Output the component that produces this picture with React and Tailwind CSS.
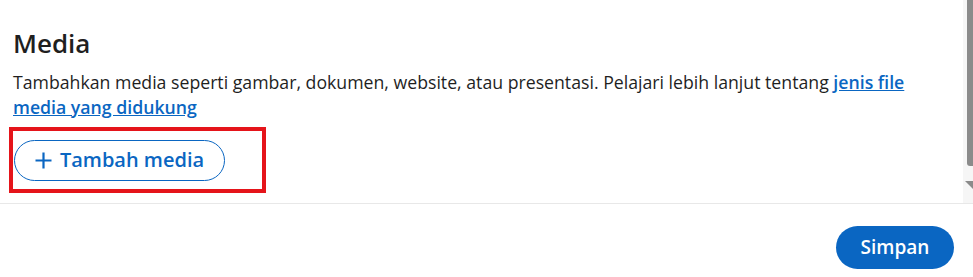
import React from 'react'

export default function App(){
  return (
    <div className="w-[973px] h-[277px] bg-white flex flex-col overflow-hidden" style={{ fontFamily: '"Open Sans", "Noto Sans", sans-serif' }}>
      {/* Scrollable content area */}
      <div className="flex h-[204px] border-b border-[#e8e8e8]">
        <div className="flex-1 pl-[13px] pr-6 pt-[26px]">
          <h2 className="text-[26px] leading-[34px] font-semibold text-[#1f1f1f]">Media</h2>
          <p className="mt-[10px] text-[17.7px] leading-[25px] text-[#1f1f1f]">
            Tambahkan media seperti gambar, dokumen, website, atau presentasi. Pelajari lebih lanjut tentang{' '}
            <a href="#" className="text-[#0a66c2] font-semibold underline">jenis file media yang didukung</a>
          </p>
          <div className="mt-[7px] -ml-[4px] w-[257px] h-[66px] border-[4px] border-[#e5141a] flex items-center pl-[1px]">
            <button className="h-[41px] w-[211px] rounded-full border border-[#0a66c2] text-[#0a66c2] font-semibold text-[20px] flex items-center justify-center gap-[8px]">
              <svg width="17" height="17" viewBox="0 0 17 17" fill="none" stroke="currentColor" strokeWidth="2.2">
                <path d="M8.5 0.5v16M0.5 8.5h16" />
              </svg>
              Tambah media
            </button>
          </div>
        </div>
        {/* Scrollbar */}
        <div className="w-[10px] bg-[#f6f6f6] flex flex-col items-end">
          <div className="w-[6px] h-[166px] bg-[#8b8b8b] rounded-bl-[3px]"></div>
          <svg width="8" height="8" viewBox="0 0 8 8" className="mt-[15px]">
            <path d="M0 0h8L8 8z" fill="#8b8b8b" />
          </svg>
        </div>
      </div>
      {/* Footer */}
      <div className="flex justify-end pr-[19px] pt-[22px]">
        <button className="h-[43px] w-[118px] rounded-full bg-[#0a66c2] text-white font-semibold text-[19px]">
          Simpan
        </button>
      </div>
    </div>
  )
}
